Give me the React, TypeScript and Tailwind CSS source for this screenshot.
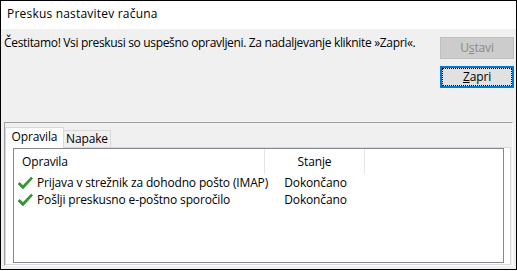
import React from "react"

const font = { fontFamily: '"Open Sans", "Noto Sans", sans-serif' }

function Check() {
  return (
    <svg width="16" height="16" viewBox="0 0 16 16" className="shrink-0">
      <path d="M1 9 L2.8 7.4 L6 10.6 L14.2 2 L15.6 3.4 L6 14 Z" fill="#2f9e2f" stroke="#1b661b" strokeWidth="0.5" strokeLinejoin="round" />
    </svg>
  )
}

const tasks = [
  { name: "Prijava v strežnik za dohodno pošto (IMAP)", status: "Dokončano" },
  { name: "Pošlji preskusno e-poštno sporočilo", status: "Dokončano" },
]

export default function App() {
  return (
    <div style={font} className="w-[517px] h-[270px] border border-black bg-[#f0f0f0] flex flex-col text-[12px] text-black leading-none tracking-[-0.15px] whitespace-nowrap">
      <div className="h-[28px] bg-white pl-[6px] pb-[2px] flex items-center tracking-[0.2px]">Preskus nastavitev računa</div>

      <div className="flex">
        <div className="flex-1 pl-[3px] pt-[8px] tracking-[-0.33px]">
          Čestitamo! Vsi preskusi so uspešno opravljeni. Za nadaljevanje kliknite »Zapri«.
        </div>
        <div className="w-[74px] mr-[2px] mt-[8px] flex flex-col gap-[7px]">
          <div className="h-[22px] bg-[#cccccc] border border-[#bfbfbf] text-[#8a8a8a] flex items-center justify-center">
            U<span className="underline">s</span>tavi
          </div>
          <div className="h-[22px] bg-[#e1e1e1] border-2 border-[#0078d7]">
            <div className="h-full border border-dotted border-black flex items-center justify-center">
              <span className="underline">Z</span>apri
            </div>
          </div>
        </div>
      </div>

      <div className="flex-1 mt-[34px] mx-[3px] mb-[3px] border-t border-l border-[#a0a0a0] border-r border-b border-r-white border-b-white flex flex-col pt-[4px]">
        <div className="flex items-end">
          <div className="relative z-10 w-[59px] h-[21px] -mb-px bg-white border border-b-0 border-[#d9d9d9] flex items-center justify-center pb-[2px]">
            Opravila
          </div>
          <div className="w-[47px] h-[17px] bg-[#f0f0f0] border-t border-r border-[#d9d9d9] flex items-center justify-center">
            Napake
          </div>
        </div>
        <div className="flex-1 mr-[1px] bg-white border border-[#d9d9d9] pl-[7px] pr-[6px] pb-[1px] flex">
          <div className="flex-1 border border-[#828790] flex flex-col">
            <div className="h-[25px] flex">
              <div className="w-[251px] pl-[8px] flex items-center border-r border-[#e5e5e5]">Opravila</div>
              <div className="w-[100px] flex items-center justify-center border-r border-[#e5e5e5]">Stanje</div>
            </div>
            {tasks.map((t) => (
              <div key={t.name} className="h-[17px] flex">
                <div className="w-[252px] pl-[3px] flex items-center gap-[4px]">
                  <Check />
                  <span>{t.name}</span>
                </div>
                <div className="w-[99px] flex items-center justify-center">{t.status}</div>
              </div>
            ))}
          </div>
        </div>
      </div>
    </div>
  )
}
